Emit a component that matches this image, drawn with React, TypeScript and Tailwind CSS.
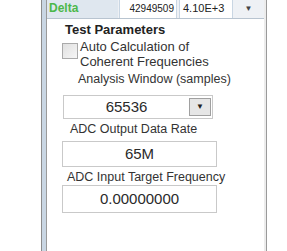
const font = { fontFamily: '"Liberation Sans", Arial, sans-serif' }

const Field = ({ value, h }: { value: string; h: string }) => (
  <div className={`ml-[15px] w-[155px] ${h} border border-[#c9c9c9] bg-white flex items-center justify-center text-[15px] text-[#2a2a2a]`}>
    {value}
  </div>
)

const Label = ({ children, pl }: { children: string; pl: string }) => (
  <div className={`${pl} h-[14px] text-[12.5px] leading-[14px] text-[#333] whitespace-nowrap`}>{children}</div>
)

export default function App() {
  return (
    <div className="w-[287px] h-[251px] bg-white flex overflow-hidden" style={font}>
      <div className="w-[41px]" />
      <div className="w-px bg-[#8c8c8c]" />
      <div className="w-[4px] bg-[#c9d6e3]" />
      <div className="w-px bg-[#9a9a9a]" />
      <div className="w-[217px] flex flex-col">
        <div className="h-[19px] flex bg-[#eef1f5] border-b border-[#b8c4d0]">
          <div className="w-[71px] bg-[#dfe7ef] text-[#4cb84a] font-bold text-[12px] pl-[2px] leading-[17px]">Delta</div>
          <div className="ml-[1px] w-[58px] bg-white border-x border-[#c9d6e3] text-[10px] text-right pr-[2px] leading-[17px] text-[#222]">42949509</div>
          <div className="ml-[2px] w-[54px] bg-white border-x border-[#c9d6e3] text-[11px] pl-[3px] leading-[17px] text-[#222]">4.10E+3</div>
          <div className="flex-1 flex items-center justify-center text-[8px] text-[#444]">▼</div>
        </div>
        <div className="pl-[18px] pt-[4px] h-[17px] text-[13px] font-bold text-[#222] leading-[14px]">Test Parameters</div>
        <div className="flex pl-[15px] pt-[3px]">
          <div className="w-[16px] h-[16px] mt-[4px] border border-[#aaa] bg-gradient-to-br from-[#e0e0e0] to-[#f6f6f6]" />
          <div className="pl-[2px] text-[13px] leading-[15px] text-[#333] whitespace-nowrap">
            Auto Calculation of
            <br />
            Coherent Frequencies
          </div>
        </div>
        <div className="pt-[3px]">
          <Label pl="pl-[31px]">Analysis Window (samples)</Label>
        </div>
        <div className="pt-[9px]">
          <div className="ml-[16px] w-[150px] h-[24px] border border-[#c9c9c9] bg-white flex items-center">
            <div className="flex-1 text-center text-[15px] text-[#2a2a2a]">65536</div>
            <div className="w-[22px] h-[18px] mr-[1px] border border-[#a0a0a0] bg-[#e6e6e6] flex items-center justify-center text-[8px] text-[#222]">▼</div>
          </div>
        </div>
        <div className="pt-[3px]">
          <Label pl="pl-[23px]">ADC Output Data Rate</Label>
        </div>
        <div className="pt-[5px]">
          <Field value="65M" h="h-[26px]" />
        </div>
        <div className="pt-[3px]">
          <Label pl="pl-[20px]">ADC Input Target Frequency</Label>
        </div>
        <div className="pt-[1px]">
          <Field value="0.00000000" h="h-[28px]" />
        </div>
      </div>
      <div className="w-[2px] bg-[#ececec]" />
      <div className="w-px bg-[#9a9a9a]" />
      <div className="flex-1" />
    </div>
  )
}
